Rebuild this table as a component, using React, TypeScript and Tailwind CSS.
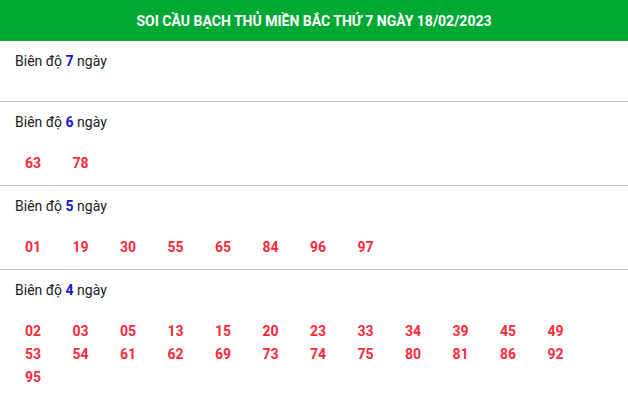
const sections = [
  { days: 7, numbers: [] as string[] },
  { days: 6, numbers: ['63', '78'] },
  { days: 5, numbers: ['01', '19', '30', '55', '65', '84', '96', '97'] },
  {
    days: 4,
    numbers: [
      '02', '03', '05', '13', '15', '20', '23', '33', '34', '39', '45', '49',
      '53', '54', '61', '62', '69', '73', '74', '75', '80', '81', '86', '92',
      '95',
    ],
  },
];

export default function App() {
  return (
    <div className="w-[628px] bg-white font-['Roboto',sans-serif]">
      {/* Title bar */}
      <div className="h-[41px] bg-[#00a934] flex items-center justify-center">
        <h1 className="text-white text-[14px] font-bold leading-none whitespace-nowrap">
          SOI CẦU BẠCH THỦ MIỀN BẮC THỨ 7 NGÀY 18/02/2023
        </h1>
      </div>

      {sections.map((s) => (
        <div key={s.days} className="pt-[10px] pb-[10px] border-b border-[#c8c8c8]">
          <div className="pl-[15px] text-[14px] leading-5 text-[#222]">
            Biên độ <span className="font-bold text-[#1515d6]">{s.days}</span> ngày
          </div>
          <div className="mt-5 pl-[25px] grid grid-cols-[repeat(12,47.5px)]">
            {s.numbers.map((n) => (
              <span key={n} className="text-[14px] leading-[23px] font-bold text-[#fb2a3a]">
                {n}
              </span>
            ))}
          </div>
        </div>
      ))}
    </div>
  );
}
